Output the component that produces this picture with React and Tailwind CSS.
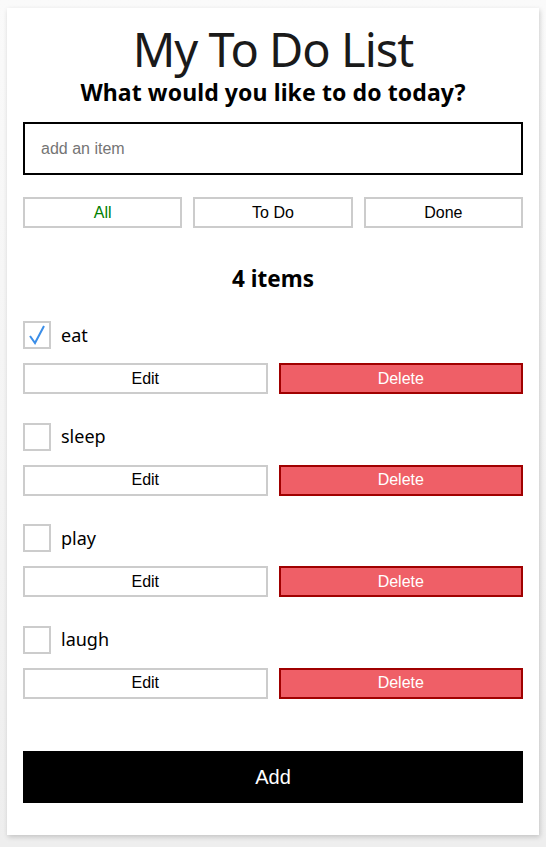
import React from "react";

const items = [
  { name: "eat", done: true },
  { name: "sleep", done: false },
  { name: "play", done: false },
  { name: "laugh", done: false },
];

const seg = { fontFamily: '"Noto Sans", "Open Sans", sans-serif' };
const arial = { fontFamily: '"Liberation Sans", Arial, sans-serif' };

export default function App() {
  return (
    <div className="min-h-[847px] bg-gradient-to-b from-[#fafafa] to-[#eeeeee] pt-2 pb-3">
      <div className="mx-auto w-[532px] bg-white px-4 pb-[32px] shadow-[1px_2px_5px_rgba(0,0,0,0.18)]">
        <h1
          className="pt-[14px] text-center text-[47px] leading-[54px] tracking-[-1px] text-[#1a1a1a]"
          style={seg}
        >
          My To Do List
        </h1>
        <h2
          className="pt-[2px] text-center text-[23px] font-bold leading-[28px] tracking-[0.1px] text-black"
          style={seg}
        >
          What would you like to do today?
        </h2>
        <div className="mt-[16px] h-[53px] border-2 border-black flex items-center px-4">
          <span className="text-[16px] text-[#757575]" style={arial}>
            add an item
          </span>
        </div>
        <div className="mt-[22px] grid grid-cols-3 gap-[11px]">
          {["All", "To Do", "Done"].map((f, i) => (
            <div
              key={f}
              className={`h-[31px] border-2 border-[#cccccc] flex items-center justify-center pt-[1px] text-[16px] ${
                i === 0 ? "text-[#008000]" : "text-black"
              }`}
              style={arial}
            >
              {f}
            </div>
          ))}
        </div>
        <div
          className="mt-[36px] text-center text-[22.5px] font-bold leading-[30px] text-black"
          style={seg}
        >
          4 items
        </div>
        <div className="mt-[27px] flex flex-col gap-[28.5px]">
          {items.map((it) => (
            <div key={it.name} className="flex flex-col gap-[14px]">
              <div className="flex items-center gap-[10px] h-[28px]">
                <div className="w-[28px] h-[28px] border-2 border-[#cccccc] flex items-center justify-center">
                  {it.done && (
                    <svg width="20" height="22" viewBox="0 0 20 22">
                      <path
                        d="M3 12 L8 19 L17 2"
                        fill="none"
                        stroke="#3b8ee8"
                        strokeWidth="2"
                        strokeLinejoin="miter"
                      />
                    </svg>
                  )}
                </div>
                <span className="text-[18px] text-black" style={seg}>
                  {it.name}
                </span>
              </div>
              <div className="grid grid-cols-2 gap-[11px]">
                <div
                  className="h-[31px] border-2 border-[#cccccc] flex items-center justify-center text-[16px] text-black"
                  style={arial}
                >
                  Edit
                </div>
                <div
                  className="h-[31px] border-2 border-[#a00000] bg-[#ef5f67] flex items-center justify-center text-[16px] text-white"
                  style={arial}
                >
                  Delete
                </div>
              </div>
            </div>
          ))}
        </div>
        <div
          className="mt-[52px] h-[52px] bg-black flex items-center justify-center text-[20px] text-white"
          style={arial}
        >
          Add
        </div>
      </div>
    </div>
  );
}
